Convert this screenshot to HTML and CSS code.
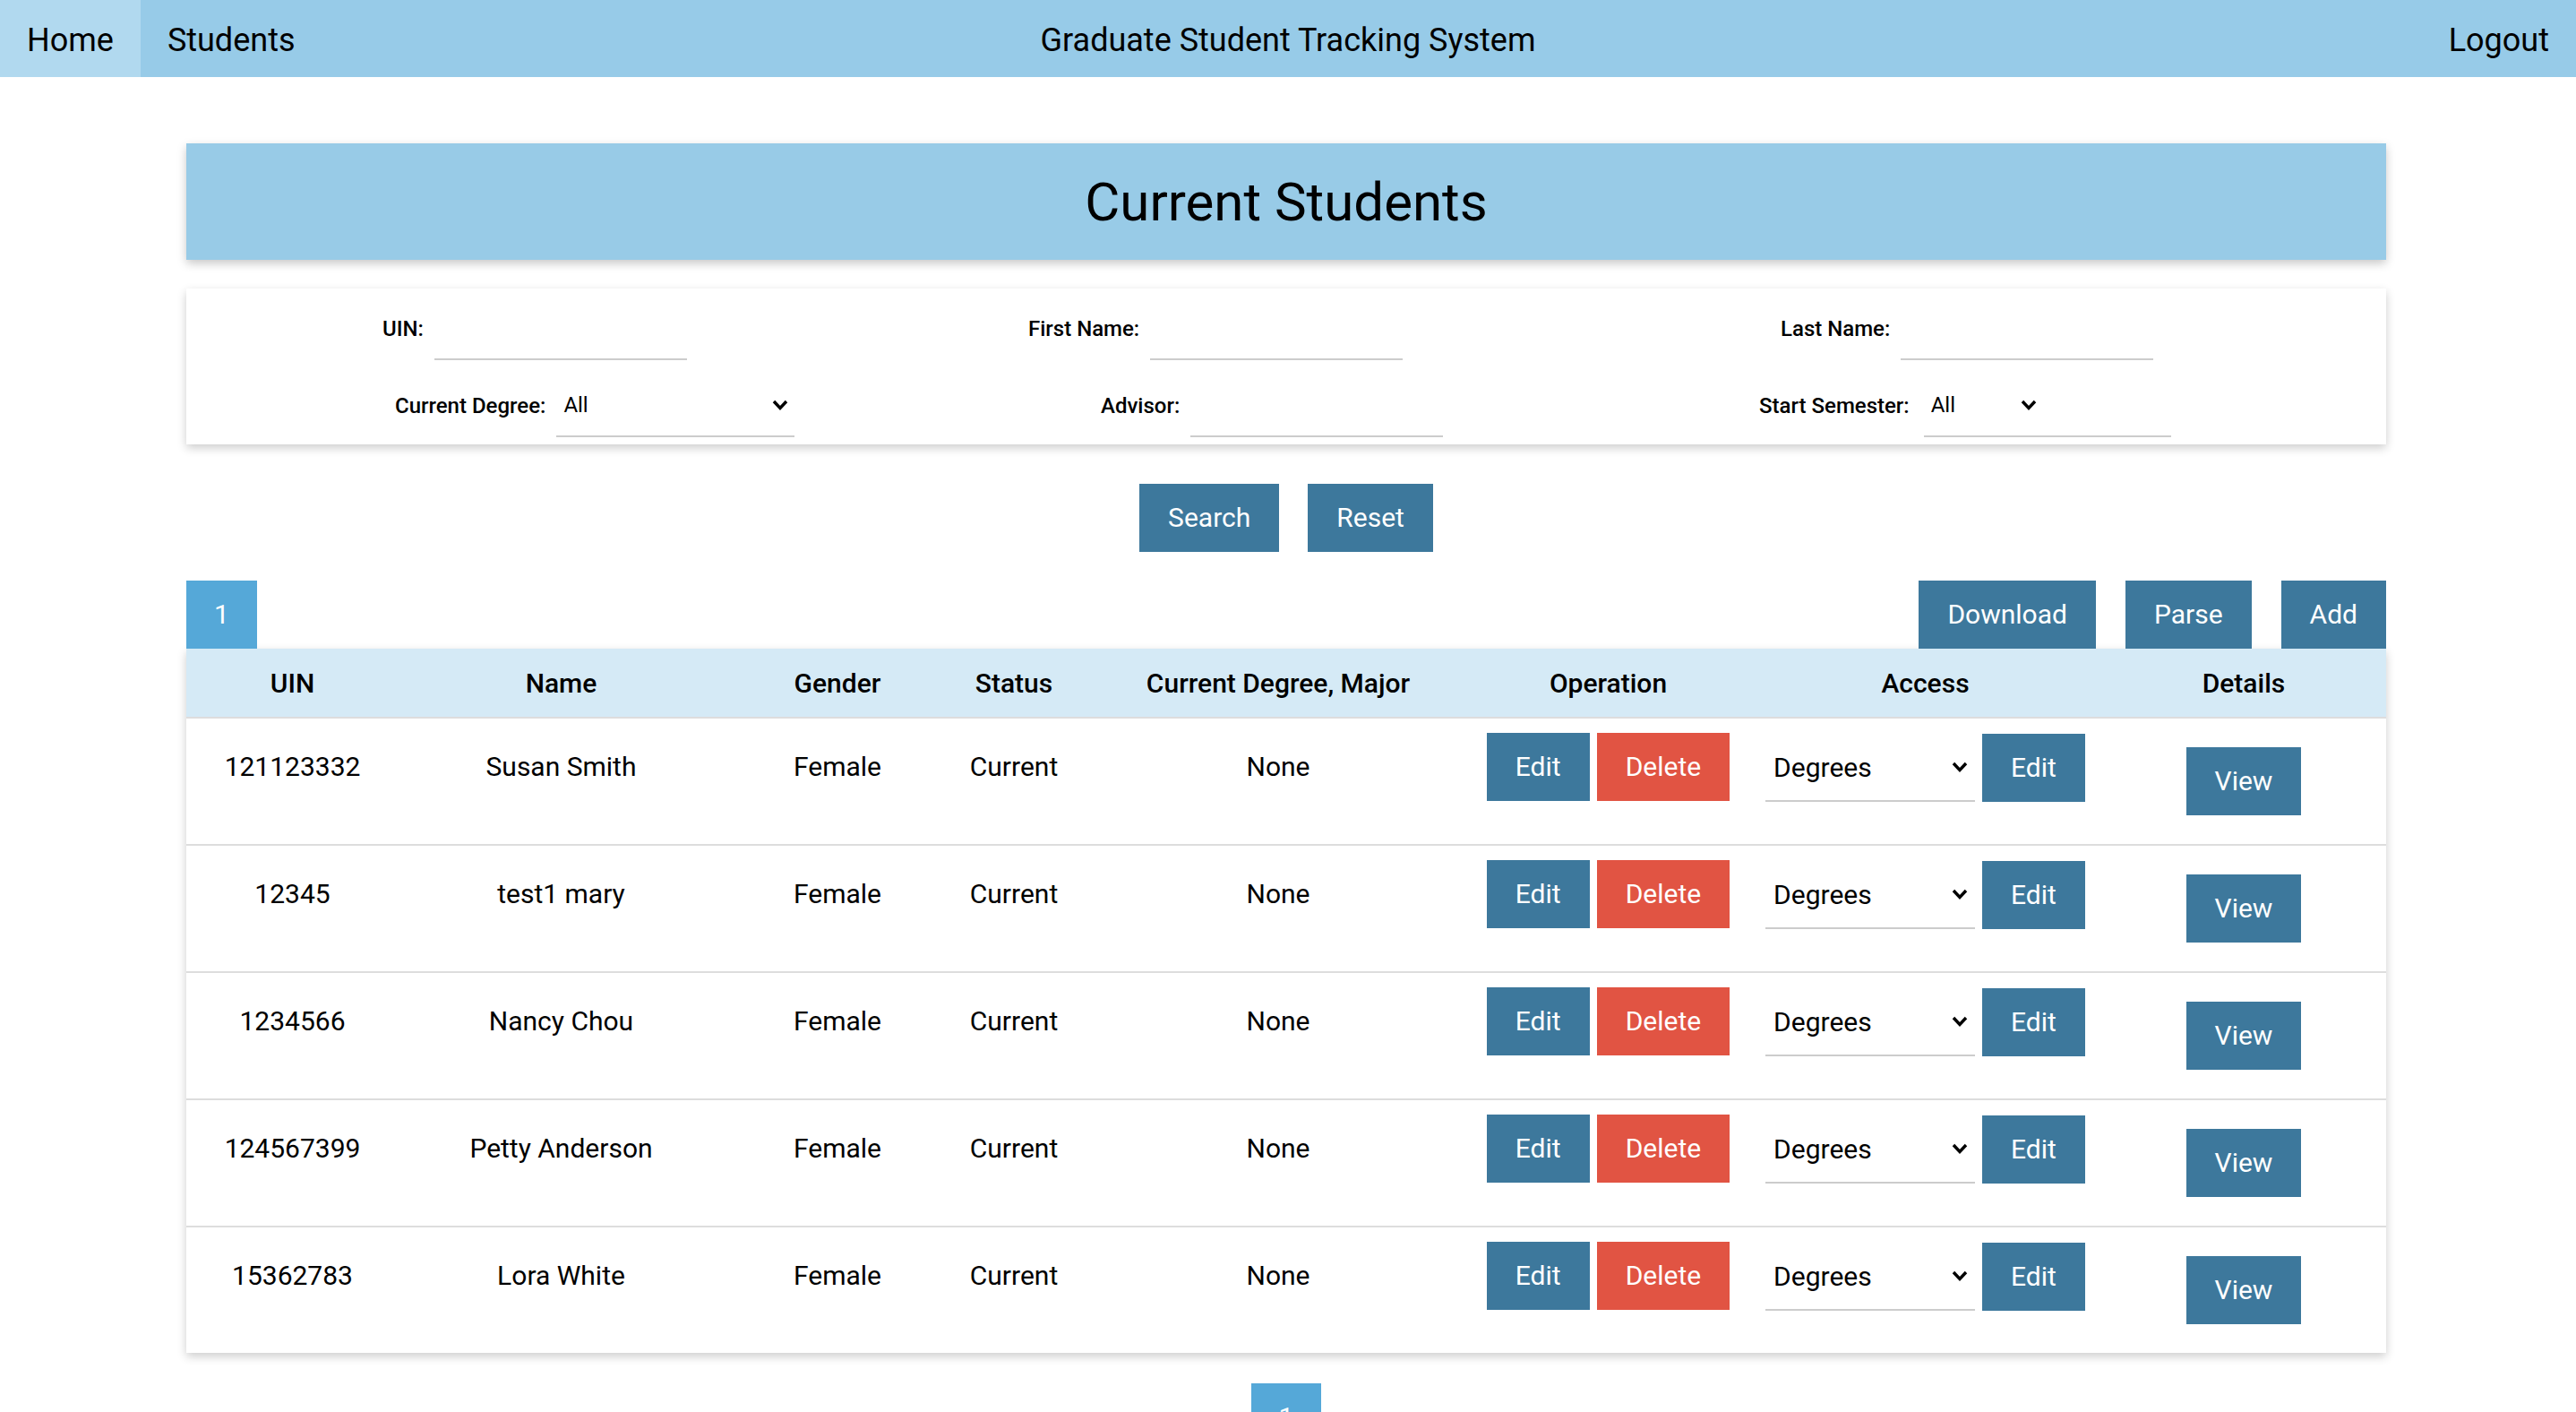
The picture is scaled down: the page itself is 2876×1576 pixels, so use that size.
FILE: index.html
```html
<!DOCTYPE html>
<html lang="en">
<head>
<meta charset="utf-8">
<title>Graduate Student Tracking System</title>
<link rel="stylesheet" href="styles.css">
</head>
<body>
<nav class="navbar">
  <div class="nav-left">
    <a class="nav-link active" href="#">Home</a>
    <a class="nav-link" href="#">Students</a>
  </div>
  <div class="nav-title">Graduate Student Tracking System</div>
  <div class="nav-right"><a class="nav-link" href="#">Logout</a></div>
</nav>

<main class="container">
  <header class="page-header"><h1>Current Students</h1></header>

  <section class="filters">
    <div class="filter-row row-1">
      <div class="field f-uin"><label>UIN:</label><input class="text-input" type="text"></div>
      <div class="field f-first"><label>First Name:</label><input class="text-input" type="text"></div>
      <div class="field"><label>Last Name:</label><input class="text-input" type="text"></div>
    </div>
    <div class="filter-row row-2">
      <div class="field f-degree"><label>Current Degree:</label>
        <div class="select-wrap sw-degree">
          <select><option>All</option></select>
          <svg class="chev" width="18" height="12" viewBox="0 0 18 12"><path d="M2 2 L9 9.5 L16 2" fill="none" stroke="#000" stroke-width="3.4"/></svg>
        </div>
      </div>
      <div class="field f-advisor"><label>Advisor:</label><input class="text-input" type="text"></div>
      <div class="field"><label>Start Semester:</label>
        <div class="select-wrap sw-semester">
          <select><option>All</option></select>
          <svg class="chev" width="18" height="12" viewBox="0 0 18 12"><path d="M2 2 L9 9.5 L16 2" fill="none" stroke="#000" stroke-width="3.4"/></svg>
        </div>
      </div>
    </div>
  </section>

  <div class="actions">
    <button class="btn">Search</button>
    <button class="btn">Reset</button>
  </div>

  <div class="toolbar">
    <button class="btn btn-page">1</button>
    <div class="toolbar-right">
      <button class="btn">Download</button>
      <button class="btn">Parse</button>
      <button class="btn">Add</button>
    </div>
  </div>

  <section class="table-card">
    <table class="students">
      <colgroup>
        <col class="c-uin"><col class="c-name"><col class="c-gender"><col class="c-status">
        <col class="c-degree"><col class="c-op"><col class="c-access"><col class="c-details">
      </colgroup>
      <thead>
        <tr>
          <th>UIN</th><th>Name</th><th>Gender</th><th>Status</th>
          <th>Current Degree, Major</th><th>Operation</th><th>Access</th><th class="th-details">Details</th>
        </tr>
      </thead>
      <tbody>
        <tr>
          <td>121123332</td><td>Susan Smith</td><td>Female</td><td>Current</td><td>None</td>
          <td><div class="ops"><button class="btn">Edit</button><button class="btn btn-danger">Delete</button></div></td>
          <td class="td-access"><div class="ops"><div class="select-wrap sw-access"><select><option>Degrees</option></select><svg class="chev" width="18" height="13" viewBox="0 0 18 13"><path d="M2 2.5 L9 10 L16 2.5" fill="none" stroke="#000" stroke-width="3.4"/></svg></div><button class="btn">Edit</button></div></td>
          <td class="td-details"><button class="btn">View</button></td>
        </tr>
        <tr>
          <td>12345</td><td>test1 mary</td><td>Female</td><td>Current</td><td>None</td>
          <td><div class="ops"><button class="btn">Edit</button><button class="btn btn-danger">Delete</button></div></td>
          <td class="td-access"><div class="ops"><div class="select-wrap sw-access"><select><option>Degrees</option></select><svg class="chev" width="18" height="13" viewBox="0 0 18 13"><path d="M2 2.5 L9 10 L16 2.5" fill="none" stroke="#000" stroke-width="3.4"/></svg></div><button class="btn">Edit</button></div></td>
          <td class="td-details"><button class="btn">View</button></td>
        </tr>
        <tr>
          <td>1234566</td><td>Nancy Chou</td><td>Female</td><td>Current</td><td>None</td>
          <td><div class="ops"><button class="btn">Edit</button><button class="btn btn-danger">Delete</button></div></td>
          <td class="td-access"><div class="ops"><div class="select-wrap sw-access"><select><option>Degrees</option></select><svg class="chev" width="18" height="13" viewBox="0 0 18 13"><path d="M2 2.5 L9 10 L16 2.5" fill="none" stroke="#000" stroke-width="3.4"/></svg></div><button class="btn">Edit</button></div></td>
          <td class="td-details"><button class="btn">View</button></td>
        </tr>
        <tr>
          <td>124567399</td><td>Petty Anderson</td><td>Female</td><td>Current</td><td>None</td>
          <td><div class="ops"><button class="btn">Edit</button><button class="btn btn-danger">Delete</button></div></td>
          <td class="td-access"><div class="ops"><div class="select-wrap sw-access"><select><option>Degrees</option></select><svg class="chev" width="18" height="13" viewBox="0 0 18 13"><path d="M2 2.5 L9 10 L16 2.5" fill="none" stroke="#000" stroke-width="3.4"/></svg></div><button class="btn">Edit</button></div></td>
          <td class="td-details"><button class="btn">View</button></td>
        </tr>
        <tr>
          <td>15362783</td><td>Lora White</td><td>Female</td><td>Current</td><td>None</td>
          <td><div class="ops"><button class="btn">Edit</button><button class="btn btn-danger">Delete</button></div></td>
          <td class="td-access"><div class="ops"><div class="select-wrap sw-access"><select><option>Degrees</option></select><svg class="chev" width="18" height="13" viewBox="0 0 18 13"><path d="M2 2.5 L9 10 L16 2.5" fill="none" stroke="#000" stroke-width="3.4"/></svg></div><button class="btn">Edit</button></div></td>
          <td class="td-details"><button class="btn">View</button></td>
        </tr>
      </tbody>
    </table>
  </section>

  <div class="pager">
    <button class="btn btn-page">1</button>
  </div>
</main>
</body>
</html>
```

FILE: styles.css
```css
* { box-sizing: border-box; }

html, body {
  margin: 0;
  padding: 0;
  overflow: hidden;
}

body {
  font-family: Roboto, "Liberation Sans", Arial, sans-serif;
  color: #000;
  background: #fff;
}

/* ---------- Navbar ---------- */
.navbar {
  display: grid;
  grid-template-columns: 1fr auto 1fr;
  height: 86px;
  background: #97cbe8;
}

.nav-left { display: flex; }

.nav-right {
  display: flex;
  justify-content: flex-end;
}

.nav-link {
  display: flex;
  align-items: center;
  padding: 3px 30px 0;
  font-size: 36px;
  color: #000;
  text-decoration: none;
}

.nav-link.active { background: #b1d9ef; }

.nav-title {
  display: flex;
  align-items: center;
  padding-top: 3px;
  font-size: 36px;
}

/* ---------- Layout ---------- */
.container {
  width: 2456px;
  margin: 74px 0 0 208px;
}

.page-header {
  height: 130px;
  background: #98cbe7;
  display: flex;
  align-items: center;
  justify-content: center;
  box-shadow: 0 4px 10px rgba(0, 0, 0, 0.22);
}

.page-header h1 {
  margin: 0;
  font-size: 60px;
  font-weight: 400;
}

/* ---------- Filters ---------- */
.filters {
  margin-top: 32px;
  height: 174px;
  padding-top: 10px;
  background: #fff;
  box-shadow: 0 4px 10px rgba(0, 0, 0, 0.2);
}

.filter-row {
  display: flex;
  height: 70px;
}

.filter-row + .filter-row { margin-top: 16px; }

.row-1 { padding-left: 219px; }
.row-2 { padding-left: 233px; }

.field {
  display: flex;
  align-items: center;
}

.f-uin { width: 721px; }
.f-first { width: 840px; }
.f-degree { width: 788px; }
.f-advisor { width: 735px; }

.field label {
  font-size: 24px;
  font-weight: 500;
  margin-right: 12px;
}

.text-input {
  width: 282px;
  height: 70px;
  border: 0;
  border-bottom: 2px solid #cccccc;
  background: transparent;
  font-family: inherit;
  font-size: 24px;
  outline: none;
}

.select-wrap {
  position: relative;
  height: 70px;
  border-bottom: 2px solid #cccccc;
}

.select-wrap select {
  appearance: none;
  -webkit-appearance: none;
  border: 0;
  border-radius: 0;
  background: transparent;
  height: 100%;
  width: 100%;
  padding: 0 0 0 8px;
  font-family: inherit;
  font-size: 24px;
  color: #000;
  outline: none;
}

.chev {
  position: absolute;
  top: 50%;
  transform: translateY(-50%);
  pointer-events: none;
}

.sw-degree { width: 266px; }
.sw-degree .chev { right: 7px; }

.sw-semester {
  width: 276px;
  margin-left: 4px;
}
.sw-semester select { width: 134px; }
.sw-semester .chev { left: 108px; }

/* ---------- Buttons ---------- */
.btn {
  display: inline-flex;
  align-items: center;
  justify-content: center;
  height: 76px;
  padding: 0 32px;
  border: 0;
  border-radius: 0;
  background: #3d789c;
  color: #fff;
  font-family: inherit;
  font-size: 30px;
  line-height: 1;
}

.btn-danger { background: #e15443; }

.btn-page {
  background: #55a8d8;
  padding: 0 31px;
}

.actions {
  display: flex;
  justify-content: center;
  gap: 32px;
  margin-top: 44px;
}

.toolbar {
  display: flex;
  justify-content: space-between;
  margin-top: 32px;
}

.toolbar-right {
  display: flex;
  gap: 33px;
}

/* ---------- Table ---------- */
.table-card {
  background: #fff;
  box-shadow: 0 4px 10px rgba(0, 0, 0, 0.2);
}

.students {
  width: 100%;
  table-layout: fixed;
  border-collapse: separate;
  border-spacing: 0;
}

.c-uin { width: 237px; }
.c-name { width: 363px; }
.c-gender { width: 254px; }
.c-status { width: 140px; }
.c-degree { width: 450px; }
.c-op { width: 287px; }
.c-access { width: 421px; }
.c-details { width: 304px; }

.students th {
  height: 78px;
  padding: 0;
  background: #d5eaf6;
  border-bottom: 2px solid #dddddd;
  font-size: 30px;
  font-weight: 500;
  text-align: center;
}

.students td {
  height: 142px;
  padding: 16px 0 0;
  border-bottom: 2px solid #dddddd;
  vertical-align: top;
  text-align: center;
  font-size: 30px;
  line-height: 76px;
}

.students tbody tr:last-child td {
  border-bottom: 0;
  height: 140px;
}

.students .th-details,
.students .td-details { padding-right: 14px; }

.students .td-access { padding-top: 17px; }

.students .td-details {
  vertical-align: middle;
  padding-top: 0;
}

.ops {
  display: flex;
  justify-content: center;
  gap: 8px;
}

.sw-access {
  width: 234px;
  height: 76px;
}

.sw-access select {
  font-size: 30px;
  padding-left: 9px;
}

.sw-access .chev { right: 8px; }

/* ---------- Pager ---------- */
.pager {
  display: flex;
  justify-content: center;
  margin-top: 34px;
}
```
